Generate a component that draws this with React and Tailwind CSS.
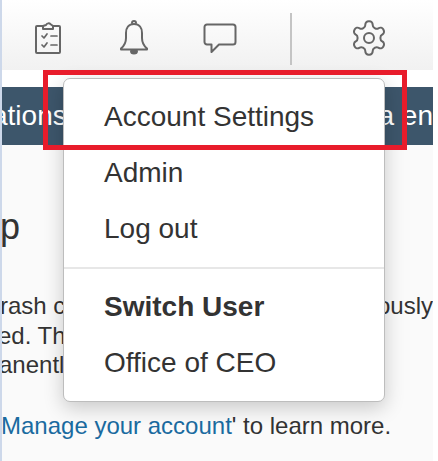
import React from "react";

const stroke = "#666666";

function Clipboard() {
  return (
    <svg width="28" height="34" viewBox="0 0 28 34" fill="none" stroke={stroke} strokeWidth="2" strokeLinejoin="round" strokeLinecap="round">
      <path d="M9 5H3a1 1 0 0 0-1 1v25a1 1 0 0 0 1 1h22a1 1 0 0 0 1-1V6a1 1 0 0 0-1-1h-6" />
      <path d="M9 8V5l3-1q2-3 5-.500l2 1.500v3z" />
      <path d="M8 15l2 2 3-4M8 24l2 2 3-4" strokeWidth="1.7" />
      <path d="M17 15h6M17 24h6" strokeWidth="1.7" />
    </svg>
  );
}

function Bell() {
  return (
    <svg width="30" height="36" viewBox="0 0 30 36" fill="none" stroke={stroke} strokeWidth="2" strokeLinejoin="round" strokeLinecap="round">
      <path d="M15 5c-5.500 0-8 4-8 9v5c0 5-2 8-5 10.500v1h26v-1c-3-2.500-5-5.500-5-10.500v-5c0-5-2.500-9-8-9z" />
      <path d="M13 4a2 2 0 0 1 4 0" />
      <path d="M12 32a3 2.500 0 0 0 6 0z" fill={stroke} />
    </svg>
  );
}

function Chat() {
  return (
    <svg width="34" height="32" viewBox="0 0 34 32" fill="none" stroke={stroke} strokeWidth="2" strokeLinejoin="round" strokeLinecap="round">
      <path d="M4 1.500h26a2.500 2.500 0 0 1 2.500 2.500v15a2.500 2.500 0 0 1-2.500 2.500H16l-7.500 7.500v-7.500H4A2.500 2.500 0 0 1 1.500 19V4A2.500 2.500 0 0 1 4 1.500z" />
    </svg>
  );
}

function Gear() {
  return (
    <svg width="40" height="40" viewBox="0 0 24 24" fill="none" stroke={stroke} strokeWidth="1.2" strokeLinejoin="round" strokeLinecap="round">
      <path d="M12.220 2h-.440a2 2 0 0 0-2 2v.180a2 2 0 0 1-1 1.730l-.430.250a2 2 0 0 1-2 0l-.150-.080a2 2 0 0 0-2.730.730l-.220.380a2 2 0 0 0 .730 2.730l.150.100a2 2 0 0 1 1 1.720v.510a2 2 0 0 1-1 1.740l-.150.090a2 2 0 0 0-.730 2.730l.220.380a2 2 0 0 0 2.730.730l.150-.080a2 2 0 0 1 2 0l.430.250a2 2 0 0 1 1 1.730V20a2 2 0 0 0 2 2h.440a2 2 0 0 0 2-2v-.180a2 2 0 0 1 1-1.730l.430-.250a2 2 0 0 1 2 0l.150.080a2 2 0 0 0 2.730-.730l.220-.390a2 2 0 0 0-.730-2.730l-.150-.080a2 2 0 0 1-1-1.740v-.500a2 2 0 0 1 1-1.740l.150-.090a2 2 0 0 0 .730-2.730l-.220-.380a2 2 0 0 0-2.730-.730l-.150.080a2 2 0 0 1-2 0l-.430-.250a2 2 0 0 1-1-1.730V4a2 2 0 0 0-2-2z" />
      <circle cx="12" cy="12" r="3" />
    </svg>
  );
}

function MenuItem({ children, bold }) {
  return (
    <div className={`h-14 flex items-center pl-10 ${bold ? "font-bold" : ""}`}>{children}</div>
  );
}

export default function App() {
  return (
    <div className="relative w-[438px] h-[461px] overflow-hidden bg-white font-['Liberation_Sans',Arial,sans-serif] text-[#333333]">
      <div className="w-[433px] h-full border-l-2 border-[#cdd8ea] bg-[#fafafa] flex flex-col overflow-hidden">
        <header className="h-[70px] bg-gradient-to-b from-white to-[#f1f1f1] flex items-start">
          <div className="ml-[32px] mt-[21px]"><Clipboard /></div>
          <div className="ml-[57px] mt-[19px]"><Bell /></div>
          <div className="ml-[54px] mt-[23px]"><Chat /></div>
          <div className="ml-[53px] mt-[13px] w-[2px] h-[52px] bg-[#c4c4c4]"></div>
          <div className="ml-[57px] mt-[18px]"><Gear /></div>
        </header>
        <div className="h-[17px] bg-white"></div>
        <div className="h-[58px] bg-[#3d566b] text-white text-[28px] flex items-center justify-between whitespace-nowrap overflow-hidden">
          <span className="ml-[-10px]">ations</span>
          <span>ca en</span>
        </div>
        <div className="mt-[60px] h-[44px] text-[36px] leading-[44px] whitespace-nowrap">
          <span className="ml-[-2px]">p</span>
        </div>
        <div className="mt-[42px] text-[24px] leading-[29.500px] whitespace-nowrap">
          <div className="flex justify-between"><span className="ml-[-2px]">rash c</span><span>ously</span></div>
          <div><span className="ml-[-4px]">ed. Th</span></div>
          <div><span className="ml-[-3px]">anently</span></div>
          <div className="mt-[31px] ml-[-1px]">
            <span className="text-[#1a6ba0]">Manage your account</span>' to learn more.
          </div>
        </div>
      </div>

      <div className="absolute left-[63px] top-[78px] w-[322px] h-[324px] bg-white rounded-[7px] border border-[#bdbdbd] shadow-[0_6px_20px_rgba(0,0,0,0.2)] text-[28px] pt-[10px]">
        <MenuItem>Account Settings</MenuItem>
        <MenuItem>Admin</MenuItem>
        <MenuItem>Log out</MenuItem>
        <div className="mt-[10px] h-[2px] bg-[#e7e7e7]"></div>
        <div className="mt-[10px]">
          <MenuItem bold>Switch User</MenuItem>
          <MenuItem>Office of CEO</MenuItem>
        </div>
      </div>

      <div className="absolute left-[43px] top-[70px] w-[364px] h-[80px] border-[5px] border-[#e81c2b]"></div>
    </div>
  );
}
